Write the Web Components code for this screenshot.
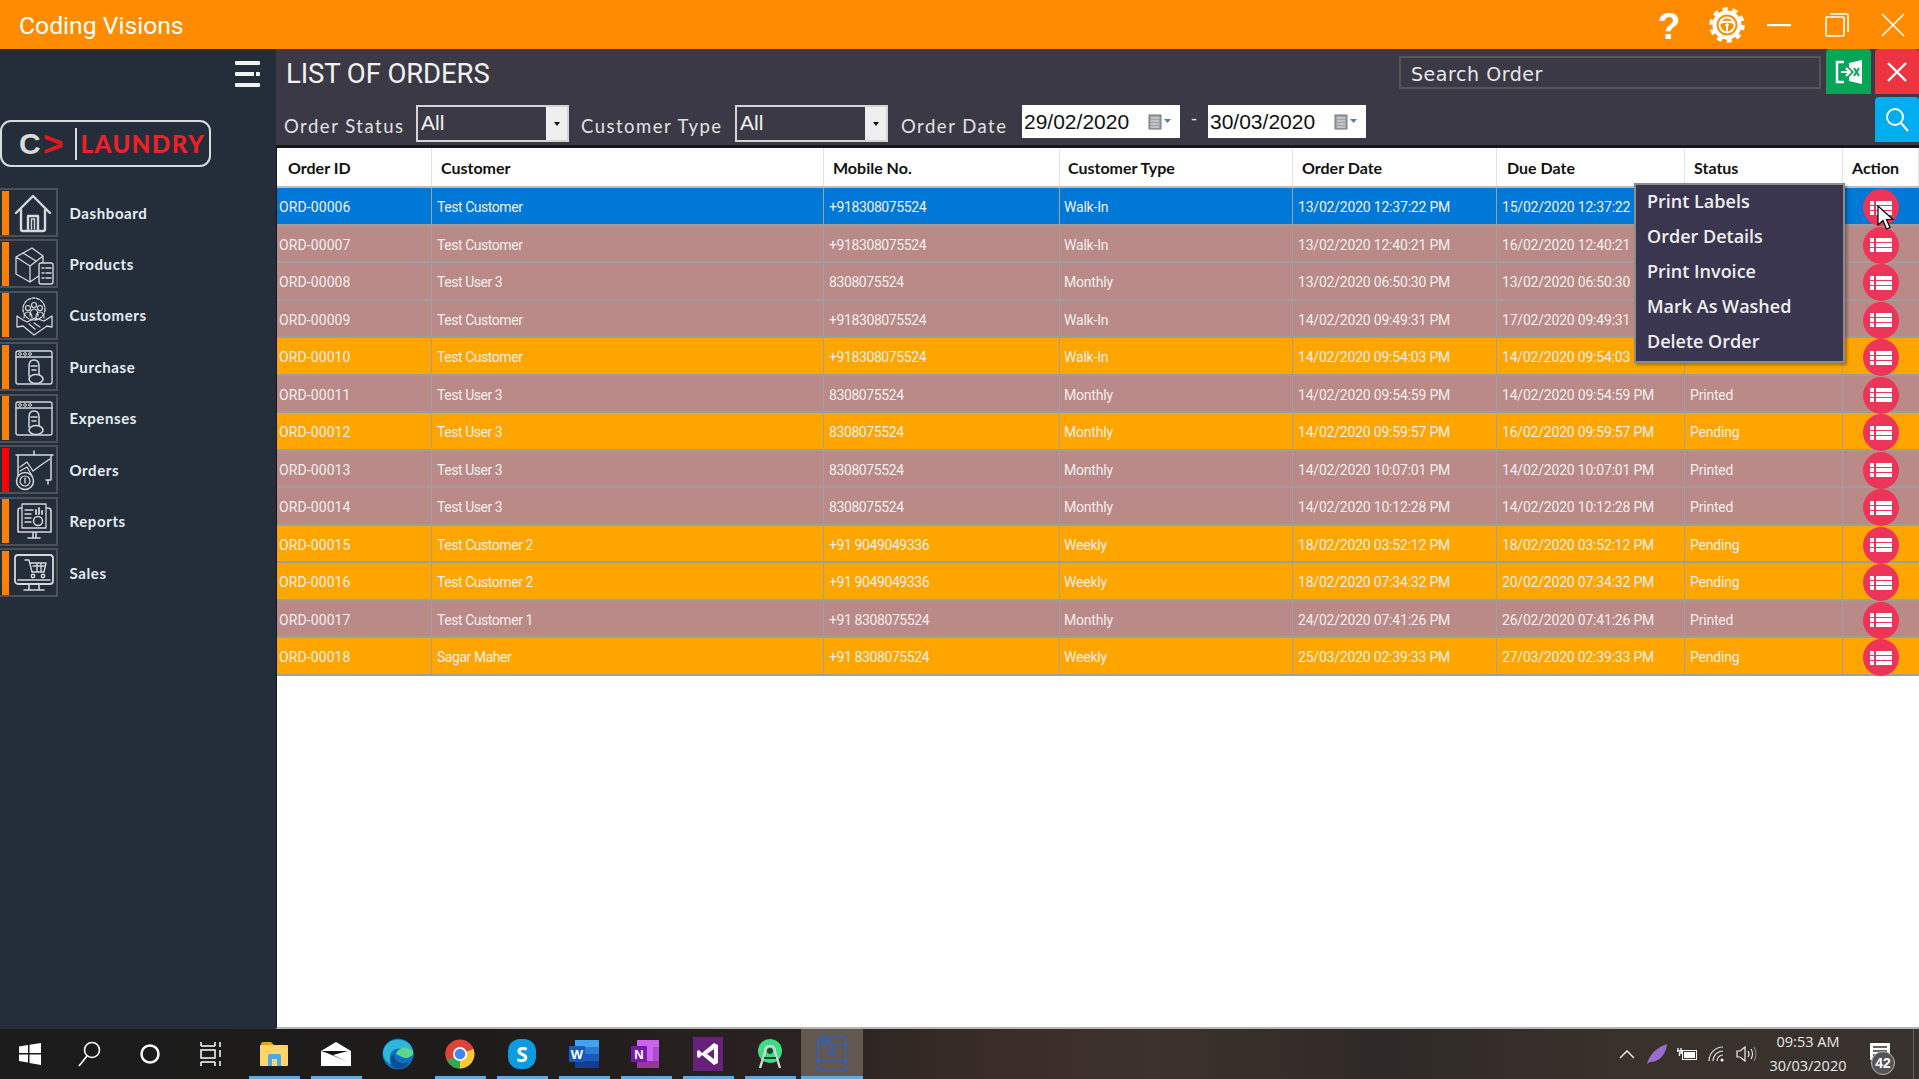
<!DOCTYPE html>
<html>
<head>
<meta charset="utf-8">
<title>Coding Visions</title>
<style>
    html, body { margin: 0; padding: 0; height: 100%; overflow: hidden; }
    body { display: flex; flex-direction: column; height: 1079px; font-family: "Liberation Sans", sans-serif; background: #242E3A; }
    .middle { display: flex; flex: 1; min-height: 0; }
    main-panel { flex: 1; min-width: 0; }
</style>
</head>
<body>
<title-bar></title-bar>
<div class="middle">
    <side-bar></side-bar>
    <main-panel></main-panel>
</div>
<task-bar></task-bar>

<script>
const navIcons = {
    home: `<path d="M3 21 L20 4 L37 21 M8 18 V37 Q8 39 10 39 H30 Q32 39 32 37 V18 M15 38 V24 H25 V38" stroke-width="2.4"/><path d="M18.500 37 V27 H21.500 V37" stroke-width="1.4"/>`,
    box: `<path d="M3 14 L19 5 L30 13 V30 L17 39 L3 31 Z M3 14 L17 23 L30 13 M17 23 V39 M10 10 L23 18" stroke-width="1.3"/><rect x="26" y="20" width="14" height="21" rx="2" fill="#242E3A" stroke-width="1.4"/><path d="M29 25 H31 M33 25 H38 M29 30 H31 M33 30 H38 M29 35 H31 M33 35 H38" stroke-width="1.4"/>`,
    people: `<circle cx="21" cy="15" r="11" stroke-width="1.3" stroke-dasharray="3 1.5"/><circle cx="15" cy="14" r="2.5" stroke-width="1.2"/><circle cx="21" cy="11" r="2.5" stroke-width="1.2"/><circle cx="27" cy="14" r="2.5" stroke-width="1.2"/><path d="M11 24 Q11 18 15 18 Q19 18 19 24 M17 22 Q17 15 21 15 Q25 15 25 22 M23 24 Q23 18 27 18 Q31 18 31 24" stroke-width="1.2"/><path d="M4 22 V33 L10 32 L21 41 L34 32 L39 33 V22 L31 27 L22 24 L14 28 L10 26 Z M16 30 L22 35 M21 29 L27 33" stroke-width="1.3"/>`,
    shop: `<rect x="3" y="5" width="36" height="33" rx="2" stroke-width="1.4"/><path d="M3 11 H39" stroke-width="1.4"/><circle cx="7" cy="8" r="1.4" stroke-width="1"/><circle cx="12" cy="8" r="1.4" stroke-width="1"/><circle cx="17" cy="8" r="1.4" stroke-width="1"/><path d="M16 30 V20 Q16 14 21 14 Q26 14 26 20 V30 M18 20 H24 M19 24 H23" stroke-width="1.5"/><ellipse cx="23" cy="33" rx="7" ry="4.5" fill="#242E3A" stroke-width="1.6"/>`,
    chart: `<path d="M3 6 H40 M5 6 V28 M38 6 V31 M21 2 V6 M33 31 H38 M35 31 V35" stroke-width="1.5"/><path d="M7 18 L14 13 L20 22 L28 16 L37 10 M7 22 L14 18 L19 27" stroke-width="1.3"/><circle cx="12" cy="32" r="8.5" fill="#242E3A" stroke-width="1.5"/><circle cx="12" cy="32" r="5" stroke-width="1.2"/><path d="M12 29 V34" stroke-width="1.4"/>`,
    report: `<path d="M7 8 H35 Q38 8 38 11 V32 H5 V11 Q5 8 7 8 Z M15 38 H27 M20 32 V38 M23 32 V38" stroke-width="1.6"/><rect x="9" y="4" width="24" height="24" fill="#242E3A" stroke-width="1.3"/><path d="M12 10 H20 M12 14 H18 M12 18 H18 M12 22 H18" stroke-width="1.4"/><path d="M23 14 V10 M26 14 V8 M29 14 V11" stroke-width="1.8"/><circle cx="25" cy="21" r="4.5" stroke-width="1.5"/>`,
    cart: `<rect x="2" y="3" width="38" height="29" rx="3" stroke-width="1.8"/><path d="M5 28 H37 M16 32 V37 M26 32 V37 M11 38 H31" stroke-width="1.6"/><path d="M12 8 H16 L19 20 H31 L33 11 H17 M20 14 H32 M24 11 V20 M28 11 V20" stroke-width="1.4"/><circle cx="20" cy="24" r="1.7" stroke-width="1.4"/><circle cx="30" cy="24" r="1.7" stroke-width="1.4"/>`
};

class TitleBar extends HTMLElement {
    constructor(){
        super();
        this.attachShadow({mode:'open'});
        this.shadowRoot.innerHTML = `
        <style>
            :host { display: flex; align-items: center; height: 49px; background: #FF8C00; color: #fff; flex: none; position: relative; }
            .name { margin: 2px 0 0 19px; font: 24.700px Roboto, sans-serif; flex: 1; }
            .help { font: bold 37px "Liberation Sans", sans-serif; width: 40px; text-align: center; margin-top: 4px; }
            svg { display: block; }
            .ctl { display: flex; align-items: center; justify-content: center; }
        </style>
        <div class="name">Coding Visions</div>
        <div class="help">?</div>
        <div class="ctl" style="width:38px;margin-left:19px;margin-top:2px">
            <svg width="38" height="38" viewBox="0 0 38 38" fill="none" stroke="#fff">
                <circle cx="19" cy="18" r="15.500" stroke-width="4.500" stroke-dasharray="5 4.740"/>
                <circle cx="19" cy="18" r="12.500" stroke-width="4"/>
                <circle cx="19" cy="18" r="7.500" stroke-width="2"/>
                <circle cx="19" cy="18" r="1.800" fill="#fff" stroke="none"/>
                <path d="M12 16 Q19 13.500 26 16 M19 18 V25" stroke-width="2"/>
            </svg>
        </div>
        <div class="ctl" style="width:24px;margin-left:21px"><svg width="24" height="4"><rect width="24" height="2.200" y="1" fill="#fff"/></svg></div>
        <div class="ctl" style="width:24px;margin-left:34px">
            <svg width="24" height="24" fill="none" stroke="#fff" stroke-width="1.600"><rect x="1" y="4" width="18" height="19" rx="1"/><path d="M5 1 H22 Q23 1 23 2 V19"/></svg>
        </div>
        <div class="ctl" style="width:24px;margin-left:32px;margin-right:14px">
            <svg width="24" height="24" stroke="#fff" stroke-width="1.600"><path d="M1 1 L23 23 M23 1 L1 23"/></svg>
        </div>`;
    }
}
window.customElements.define('title-bar', TitleBar);

class NavItem extends HTMLElement {
    constructor(){
        super();
        this.attachShadow({mode:'open'});
    }
    connectedCallback(){
        let active = this.hasAttribute("active");
        let icon = navIcons[this.getAttribute("icon")];
        this.shadowRoot.innerHTML = `
        <style>
            :host { display: flex; align-items: center; height: 49px; }
            .tile { display: flex; align-items: center; width: 58px; height: 49px; box-sizing: border-box; border: 2px solid #4C5058; border-left: 0; padding-left: 2px; }
            .bar { width: 7px; height: 44px; background: ${active ? "#FF0000" : "#FF8000"}; }
            svg { margin-left: 4px; }
            .label { margin-left: 11.500px; font: bold 15px Lato, sans-serif; color: #E6EDF5; letter-spacing: 0.6px; }
        </style>
        <div class="tile"><div class="bar"></div><svg width="42" height="42" viewBox="0 0 42 42" fill="none" stroke="#D5D8DC" stroke-linejoin="round" stroke-linecap="round">${icon}</svg></div>
        <div class="label"><slot></slot></div>`;
    }
}
window.customElements.define('nav-item', NavItem);

class SideBar extends HTMLElement {
    constructor(){
        super();
        this.attachShadow({mode:'open'});
        this.shadowRoot.innerHTML = `
        <style>
            :host { display: block; width: 276px; flex: none; background: #242E3A; box-sizing: border-box; padding-top: 12px; }
            .burger { width: 25px; margin-left: 235px; display: flex; flex-direction: column; gap: 7px; }
            .burger div { height: 4px; background: #F2F2F2; border-radius: 1px; }
            .burger .mid { background: linear-gradient(90deg, #F2F2F2 0 19px, transparent 19px 21px, #F2F2F2 21px); }
            .logo { display: flex; align-items: center; margin-top: 33px; width: 211px; height: 47px; box-sizing: border-box; border: 2px solid #D9DBDD; border-radius: 11px; padding-left: 17px; }
            .c { font: bold 30px "Liberation Sans", sans-serif; color: #DADADA; width: 24px; }
            .gt { font: bold 35px "Liberation Sans", sans-serif; color: #E8141C; width: 32px; }
            .div { width: 1.500px; height: 32px; background: #D9DBDD; margin-right: 4px; }
            .laundry { font: 900 24px Lato, sans-serif; color: #EE2027; letter-spacing: 1.500px; }
            nav { display: flex; flex-direction: column; gap: 2.450px; margin-top: 21px; }
        </style>
        <div class="burger"><div></div><div class="mid"></div><div></div></div>
        <div class="logo"><span class="c">C</span><span class="gt">&gt;</span><span class="div"></span><span class="laundry">LAUNDRY</span></div>
        <nav>
            <nav-item icon="home">Dashboard</nav-item>
            <nav-item icon="box">Products</nav-item>
            <nav-item icon="people">Customers</nav-item>
            <nav-item icon="shop">Purchase</nav-item>
            <nav-item icon="shop">Expenses</nav-item>
            <nav-item icon="chart" active>Orders</nav-item>
            <nav-item icon="report">Reports</nav-item>
            <nav-item icon="cart">Sales</nav-item>
        </nav>`;
    }
}
window.customElements.define('side-bar', SideBar);

class ComboBox extends HTMLElement {
    constructor(){
        super();
        this.attachShadow({mode:'open'});
        this.shadowRoot.innerHTML = `
        <style>
            :host { display: flex; width: 153px; height: 37px; box-sizing: border-box; border: 2px solid #D4D4D4; flex: none; }
            .val { flex: 1; font: 21px "Liberation Sans", sans-serif; color: #F2F2F2; padding-left: 3px; line-height: 32px; }
            .btn { width: 21px; background: #EFEFEF; display: flex; align-items: center; justify-content: center; }
            .btn i { border: 3px solid transparent; border-top: 4px solid #111; border-bottom: 0; }
        </style>
        <div class="val"><slot></slot></div><div class="btn"><i></i></div>`;
    }
}
window.customElements.define('combo-box', ComboBox);

class DateBox extends HTMLElement {
    constructor(){
        super();
        this.attachShadow({mode:'open'});
        this.shadowRoot.innerHTML = `
        <style>
            :host { display: flex; align-items: center; justify-content: space-between; width: 158px; height: 33px; box-sizing: border-box; background: #fff; padding: 0 8px 0 2px; flex: none; align-self: flex-start; }
            .val { font: 21px "Liberation Sans", sans-serif; color: #111; }
        </style>
        <div class="val"><slot></slot></div>
        <svg width="24" height="16" viewBox="0 0 24 16"><rect x="1" y="1" width="12" height="14" fill="#9DA3A8" stroke="#777"/><path d="M3 4 H11 M3 7 H11 M3 10 H11 M3 13 H11" stroke="#E4E6E8"/><path d="M16 5 H23 L19.500 9 Z" fill="#5A7FA8"/></svg>`;
    }
}
window.customElements.define('date-box', DateBox);

class OrderToolbar extends HTMLElement {
    constructor(){
        super();
        this.attachShadow({mode:'open'});
        this.shadowRoot.innerHTML = `
        <style>
            :host { display: block; height: 96px; background: #3A3945; flex: none; box-sizing: border-box; }
            .top { display: flex; align-items: flex-start; height: 49px; }
            h1 { margin: 6px 0 0 10px; font: 27.500px Roboto, sans-serif; color: #F2F2F2; flex: 1; line-height: 38px; letter-spacing: -0.1px; }
            .search { width: 422px; height: 33px; box-sizing: border-box; border: 2px solid #555; margin-top: 7px; font: 19px "DejaVu Sans", sans-serif; color: #E8E8E8; padding-left: 10px; line-height: 32px; letter-spacing: 0.55px; }
            .btn { display: flex; align-items: center; justify-content: center; width: 45px; height: 45px; border-radius: 4px 4px 0 0; }
            .green { background: #07A558; margin-left: 5px; }
            .red { background: #EC3340; margin-left: 4px; width: 44px; }
            .filters { display: flex; align-items: flex-start; padding-left: 8px; margin-top: 7px; }
            label { font: 18.500px Lato, sans-serif; color: #E2E2E2; letter-spacing: 1.500px; line-height: 42px; height: 37px; white-space: nowrap; }
            .blue { background: #00AEEF; width: 44px; height: 45px; margin-left: auto; border-radius: 4px 4px 0 0; display: flex; align-items: center; justify-content: center; }
            .dash { color: #ddd; font: 18px "Liberation Sans", sans-serif; width: 28px; text-align: center; line-height: 28px; }
        </style>
        <div class="top">
            <h1>LIST OF ORDERS</h1>
            <div class="search">Search Order</div>
            <div class="btn green">
                <svg width="28" height="28" viewBox="0 0 28 28" fill="none"><path d="M9 4 H2 V24 H9" stroke="#fff" stroke-width="2.500"/><path d="M6 14 H14 M11 10 L15 14 L11 18" stroke="#fff" stroke-width="2.200"/><path d="M14 5 L27 2 V26 L14 23 V19 L19 14 L14 9 Z" fill="#fff"/><path d="M19 10 L24 18 M24 10 L19 18" stroke="#07A558" stroke-width="2"/></svg>
            </div>
            <div class="btn red">
                <svg width="20" height="20" stroke="#fff" stroke-width="2.400"><path d="M1 1 L19 19 M19 1 L1 19"/></svg>
            </div>
        </div>
        <div class="filters">
            <label style="width:132px">Order Status</label>
            <combo-box>All</combo-box>
            <label style="width:154px;margin-left:12px">Customer Type</label>
            <combo-box>All</combo-box>
            <label style="width:121px;margin-left:13px">Order Date</label>
            <date-box>29/02/2020</date-box>
            <div class="dash">-</div>
            <date-box>30/03/2020</date-box>
            <div class="blue" style="margin-top:-8px">
                <svg width="24" height="26" viewBox="0 0 24 26" fill="none" stroke="#fff" stroke-width="2"><circle cx="10" cy="10" r="8"/><path d="M16 16 L23 24"/></svg>
            </div>
        </div>`;
    }
}
window.customElements.define('order-toolbar', OrderToolbar);

const gridCols = "155px 392px 236px 233px 204px 188px 158px 76px";

class OrderRow extends HTMLElement {
    constructor(){
        super();
        this.attachShadow({mode:'open'});
    }
    connectedCallback(){
        let cells = JSON.parse(this.getAttribute("cells"));
        let bg = this.getAttribute("bg");
        this.shadowRoot.innerHTML = `
        <style>
            :host { display: grid; grid-template-columns: ${gridCols}; height: 37.500px; background: ${bg}; box-sizing: border-box; border-bottom: 2px solid #9E9E9E; color: #F3EEEE; font: 14px Roboto, sans-serif; letter-spacing: -0.2px; }
            .c { display: flex; align-items: center; padding-left: 5px; border-right: 1px solid #A0A0A0; box-sizing: border-box; white-space: nowrap; overflow: hidden; }
            .c:nth-of-type(1) { padding-left: 2px; letter-spacing: 0.1px; }
            .c:nth-of-type(2) { letter-spacing: -0.45px; }
            .c:nth-of-type(3) { letter-spacing: -0.4px; }
            .c:nth-of-type(4) { padding-left: 4px; }
            .a { position: relative; border: 0; padding: 0; overflow: visible; justify-content: center; padding-right: 1px; }
            .dot { width: 36px; height: 37px; flex: none; border-radius: 50%; background: #EC3558; display: flex; align-items: center; justify-content: center; margin-top: 1px; }
        </style>
        ${cells.map(t => `<div class="c">${t}</div>`).join("")}
        <div class="c a"><div class="dot"><svg width="22" height="16" fill="#fff"><rect y="1" width="4" height="4"/><rect y="6" width="4" height="4"/><rect y="11" width="4" height="4"/><rect x="6" y="1" width="16" height="4"/><rect x="6" y="6" width="16" height="4"/><rect x="6" y="11" width="16" height="4"/></svg></div></div>`;
    }
}
window.customElements.define('order-row', OrderRow);

class ActionMenu extends HTMLElement {
    constructor(){
        super();
        this.attachShadow({mode:'open'});
        this.shadowRoot.innerHTML = `
        <style>
            :host { display: block; position: absolute; left: 1357px; top: 35px; width: 211px; height: 180px; box-sizing: border-box; background: #3A3650; border: 2px solid #8C8C8C; box-shadow: 2px 2px 3px rgba(0,0,0,.35); padding-left: 11px; z-index: 2; }
            div { height: 35px; font: 600 18px/33px "Open Sans", sans-serif; color: #EFEFEF; }
        </style>
        <div>Print Labels</div><div>Order Details</div><div>Print Invoice</div><div>Mark As Washed</div><div>Delete Order</div>`;
    }
}
window.customElements.define('action-menu', ActionMenu);

// the status of the first five orders is covered by the open menu
const orders = [
    ["ORD-00006","Test Customer","+918308075524","Walk-In","13/02/2020 12:37:22 PM","15/02/2020 12:37:22","","b"],
    ["ORD-00007","Test Customer","+918308075524","Walk-In","13/02/2020 12:40:21 PM","16/02/2020 12:40:21","","p"],
    ["ORD-00008","Test User 3","8308075524","Monthly","13/02/2020 06:50:30 PM","13/02/2020 06:50:30","","p"],
    ["ORD-00009","Test Customer","+918308075524","Walk-In","14/02/2020 09:49:31 PM","17/02/2020 09:49:31","","p"],
    ["ORD-00010","Test Customer","+918308075524","Walk-In","14/02/2020 09:54:03 PM","14/02/2020 09:54:03","","o"],
    ["ORD-00011","Test User 3","8308075524","Monthly","14/02/2020 09:54:59 PM","14/02/2020 09:54:59 PM","Printed","p"],
    ["ORD-00012","Test User 3","8308075524","Monthly","14/02/2020 09:59:57 PM","16/02/2020 09:59:57 PM","Pending","o"],
    ["ORD-00013","Test User 3","8308075524","Monthly","14/02/2020 10:07:01 PM","14/02/2020 10:07:01 PM","Printed","p"],
    ["ORD-00014","Test User 3","8308075524","Monthly","14/02/2020 10:12:28 PM","14/02/2020 10:12:28 PM","Printed","p"],
    ["ORD-00015","Test Customer 2","+91 9049049336","Weekly","18/02/2020 03:52:12 PM","18/02/2020 03:52:12 PM","Pending","o"],
    ["ORD-00016","Test Customer 2","+91 9049049336","Weekly","18/02/2020 07:34:32 PM","20/02/2020 07:34:32 PM","Pending","o"],
    ["ORD-00017","Test Customer 1","+91 8308075524","Monthly","24/02/2020 07:41:26 PM","26/02/2020 07:41:26 PM","Printed","p"],
    ["ORD-00018","Sagar Maher","+91 8308075524","Weekly","25/03/2020 02:39:33 PM","27/03/2020 02:39:33 PM","Pending","o"]
];
const rowColors = { b: "#0078D7", p: "#B98A88", o: "#FFA500" };

class OrdersTable extends HTMLElement {
    constructor(){
        super();
        this.attachShadow({mode:'open'});
        let heads = [["Order ID",11],["Customer",9],["Mobile No.",9],["Customer Type",8],["Order Date",9],["Due Date",10],["Status",9],["Action",9]];
        this.shadowRoot.innerHTML = `
        <style>
            :host { display: block; position: relative; flex: 1; background: #fff; border-top: 3px solid #16161A; border-left: 1px solid #16161A; border-bottom: 2px solid #B5B5B5; box-sizing: border-box; }
            .head { display: grid; grid-template-columns: ${gridCols}; height: 40px; border-bottom: 2px solid #BDBDBD; box-sizing: border-box; }
            .head div { display: flex; align-items: center; font: bold 16px Lato, sans-serif; color: #111; border-right: 1px solid #E4E4E4; box-sizing: border-box; white-space: nowrap; }
            .cursor { position: absolute; left: 1600px; top: 57px; z-index: 3; }
        </style>
        <div class="head">${heads.map(h => `<div style="padding-left:${h[1]}px">${h[0]}</div>`).join("")}</div>
        <div class="rows"></div>
        <action-menu></action-menu>
        <svg class="cursor" width="18" height="26" viewBox="0 0 18 26"><path d="M1 1 V20 L6 15.500 L9.500 24 L13 22.500 L9.500 14.500 L16 14.500 Z" fill="#fff" stroke="#000" stroke-width="1.200"/></svg>`;
        let rows = this.shadowRoot.querySelector(".rows");
        orders.forEach((o) => {
            let r = document.createElement("order-row");
            r.setAttribute("bg", rowColors[o[7]]);
            r.setAttribute("cells", JSON.stringify(o.slice(0, 7)));
            rows.appendChild(r);
        });
    }
}
window.customElements.define('orders-table', OrdersTable);

class MainPanel extends HTMLElement {
    constructor(){
        super();
        this.attachShadow({mode:'open'});
        this.shadowRoot.innerHTML = `
        <style>:host { display: flex; flex-direction: column; background: #fff; min-height: 0; }</style>
        <order-toolbar></order-toolbar>
        <orders-table></orders-table>`;
    }
}
window.customElements.define('main-panel', MainPanel);

const taskIcons = [
    { w: 60, svg: `<svg width="22" height="22" viewBox="0 0 22 22" fill="#fff"><path d="M0 3.500 L9 2 V10 H0 Z M10.500 1.800 L22 0 V10 H10.500 Z M0 11.500 H9 V19.500 L0 18 Z M10.500 11.500 H22 V22 L10.500 20 Z"/></svg>` },
    { w: 60, svg: `<svg width="24" height="26" viewBox="0 0 24 26" fill="none" stroke="#fff" stroke-width="1.600"><circle cx="14" cy="9" r="7.500"/><path d="M9 15 L1 25"/></svg>` },
    { w: 60, svg: `<svg width="22" height="22" viewBox="0 0 22 22" fill="none" stroke="#fff" stroke-width="2.500"><circle cx="11" cy="11" r="8.500"/></svg>` },
    { w: 62.500, svg: `<svg width="22" height="24" viewBox="0 0 22 24" fill="none" stroke="#fff" stroke-width="1.500"><path d="M1 0 V4 M15 0 V4 M1 4 H15 M1 20 V24 M15 20 V24 M1 20 H15"/><rect x="1" y="8" width="14" height="8"/><path d="M20 0 V5 M20 8 V15 M20 19 V24"/></svg>` },
    { run: 1, svg: `<svg width="28" height="26" viewBox="0 0 28 26"><path d="M1 3 Q1 1 3 1 H11 L14 4 H1 Z" fill="#E8A020"/><path d="M0 4 H27 Q28 4 28 5 V24 Q28 25 27 25 H1 Q0 25 0 24 Z" fill="#FFD56A"/><path d="M8 25 V15 Q8 13 10 13 H19 Q21 13 21 15 V25 H17 V18 H12 V25 Z" fill="#4FA8E0"/></svg>` },
    { run: 1, svg: `<svg width="30" height="24" viewBox="0 0 30 24"><path d="M0 9 L15 0 L30 9 V24 H0 Z" fill="#fff"/><path d="M0 9 H27 L12 13 L27 20 L6 11 Z" fill="#111"/></svg>` },
    { svg: `<svg width="32" height="32" viewBox="0 0 32 32"><circle cx="16" cy="16" r="15.500" fill="#0F72C0"/><path d="M1 15 C2 2 16 -1 25 4 C31 8 32 15 31 19 C28 12 20 9 14 11 C8 13 6 20 10 27 C4 24 1 20 1 15 Z" fill="#2FB6D8"/><path d="M31 13 C31 20 24 21 20 19 L14 16 C16 10 22 9 25 10 Z" fill="#5BD88A"/><path d="M12 16 C12 24 20 27 27 24 C24 30 16 33 11 29 C7 26 8 18 12 16 Z" fill="#0A4E94"/></svg>` },
    { run: 1, svg: `<svg width="30" height="30" viewBox="0 0 30 30"><circle cx="15" cy="15" r="14.500" fill="#DB4437"/><path d="M15 15 L2.500 22 A14.500 14.500 0 0 1 4 5 Z" fill="#DB4437"/><path d="M15 15 L28.500 10 A14.500 14.500 0 0 1 15 29.500 Z" fill="#FCC934"/><path d="M15 15 L15 29.500 A14.500 14.500 0 0 1 2 21.500 Z" fill="#34A853"/><circle cx="15" cy="15" r="7" fill="#fff"/><circle cx="15" cy="15" r="5.300" fill="#4285F4"/></svg>` },
    { run: 1, svg: `<svg width="28" height="32" viewBox="0 0 28 32"><rect x="0" y="1" width="28" height="30" rx="12" fill="#0D9BE0"/><text x="14" y="24" text-anchor="middle" fill="#fff" font-family="Open Sans" font-weight="700" font-size="21">S</text></svg>` },
    { run: 1, svg: `<svg width="30" height="30" viewBox="0 0 30 30"><rect x="6" y="1" width="24" height="28" rx="1" fill="#2B7CD3"/><rect x="6" y="1" width="24" height="7" fill="#41A5EE"/><rect x="6" y="15" width="24" height="7" fill="#185ABD"/><rect x="6" y="22" width="24" height="7" fill="#103F91"/><rect x="0" y="7" width="16" height="16" rx="1" fill="#185ABD"/><text x="8" y="20" text-anchor="middle" fill="#fff" font-family="Liberation Sans" font-weight="700" font-size="13">W</text></svg>` },
    { run: 1, svg: `<svg width="30" height="30" viewBox="0 0 30 30"><rect x="6" y="1" width="22" height="28" fill="#CA64EA"/><rect x="22" y="8" width="6" height="14" fill="#AE4BD5"/><rect x="6" y="22" width="22" height="7" fill="#96379F"/><rect x="0" y="7" width="16" height="16" rx="1" fill="#7719AA"/><text x="8" y="20" text-anchor="middle" fill="#fff" font-family="Liberation Sans" font-weight="700" font-size="13">N</text></svg>` },
    { run: 1, svg: `<svg width="30" height="34" viewBox="0 0 30 34"><rect y="0" width="30" height="34" fill="#68217A"/><path d="M21 6 L25 8 V26 L21 28 L9 18 L6 21 L4 20 V14 L6 13 L9 16 Z M21 12 L14 17 L21 22 Z" fill="#fff"/></svg>` },
    { run: 1, svg: `<svg width="30" height="32" viewBox="0 0 30 32"><circle cx="15" cy="13" r="12" fill="#3DDC84"/><path d="M15 8 Q20 8 20 14 L25 30 M15 8 Q10 8 10 14 L5 30" fill="none" stroke="#C8D8D0" stroke-width="2.500"/><circle cx="15" cy="13" r="3" fill="#16482C"/><path d="M9 20 H21" stroke="#16482C" stroke-width="2"/></svg>` },
    { run: 2, svg: `<svg width="30" height="36" viewBox="0 0 30 36" fill="none" stroke="#2E63C0" stroke-width="1.600"><rect x="1" y="1" width="28" height="34" rx="4"/><path d="M1 8 H29 M1 24 H29"/><circle cx="6" cy="4.500" r="1.500"/><circle cx="11" cy="4.500" r="1.500"/><path d="M11 20 L15 11 L19 20 M12.500 17 H17.500"/></svg>` }
];

class TaskBar extends HTMLElement {
    constructor(){
        super();
        this.attachShadow({mode:'open'});
        this.shadowRoot.innerHTML = `
        <style>
            :host { display: flex; align-items: stretch; height: 50px; flex: none; background: linear-gradient(90deg, #1B1B1B 0%, #1E1C1B 25%, #2A2220 42%, #3A2D28 52%, #3E322C 60%, #2F2A27 72%, #3A312C 85%, #38322E 100%); color: #fff; }
            .t { display: flex; align-items: center; justify-content: center; flex: none; position: relative; box-sizing: border-box; width: 62.100px; }
            .run1::after { content: ""; position: absolute; left: 6px; right: 5px; bottom: 0; height: 3px; background: #63A9D9; }
            .run2 { background: #625850; }
            .run2::after { content: ""; position: absolute; left: 0; right: 0; bottom: 0; height: 3px; background: #63A9D9; }
            .tray { margin-left: auto; display: flex; align-items: center; }
            .s { width: 30px; display: flex; justify-content: center; align-items: center; }
            .clock { width: 92px; text-align: center; font: 14.500px/24px "Open Sans", sans-serif; color: #E8E8E8; }
            .note { width: 60px; height: 50px; position: relative; box-sizing: border-box; border-right: 1px solid #666; }
            .note svg { position: absolute; left: 16px; top: 14px; }
            .badge { position: absolute; left: 17px; top: 22px; width: 24px; height: 24px; box-sizing: border-box; border-radius: 50%; background: #555; border: 1px solid #BBB; font: bold 14px/22px "Liberation Sans", sans-serif; text-align: center; color: #fff; }
        </style>
        ${taskIcons.map(i => `<div class="t ${i.run ? "run" + i.run : ""}" ${i.w ? `style="width:${i.w}px"` : ""}>${i.svg}</div>`).join("")}
        <div class="tray">
            <div class="s"><svg width="16" height="9" fill="none" stroke="#fff" stroke-width="1.300"><path d="M1 8 L8 1 L15 8"/></svg></div>
            <div class="s"><svg width="20" height="20" viewBox="0 0 20 20"><path d="M0 20 C2 12 8 4 20 0 C19 10 13 18 3 18 Z" fill="#9A6CD0"/></svg></div>
            <div class="s"><svg width="22" height="14" viewBox="0 0 22 14" fill="none" stroke="#fff"><rect x="6.500" y="3.500" width="14" height="9"/><rect x="8" y="5" width="11" height="6" fill="#fff" stroke="none"/><path d="M2 1 V4 M5 1 V4 M1 4 H6 V6 H3.500 V9" stroke-width="1.300"/></svg></div>
            <div class="s"><svg width="18" height="16" viewBox="0 0 18 16" fill="none" stroke="#ddd" stroke-width="1.200"><path d="M1 15 A14 14 0 0 1 15 1 M5 15 A10 10 0 0 1 15 5 M9 15 A6 6 0 0 1 15 9"/><circle cx="14" cy="14" r="1.500" fill="#fff" stroke="none"/></svg></div>
            <div class="s"><svg width="22" height="16" viewBox="0 0 22 16" fill="none" stroke="#eee" stroke-width="1.200"><path d="M1 5 H4 L9 1 V15 L4 11 H1 Z"/><path d="M12 5 Q14 8 12 11 M15 3 Q18 8 15 13" stroke-width="1.100"/><path d="M18 1 Q22 8 18 15" stroke="#888" stroke-width="1.100"/></svg></div>
            <div class="clock">09:53 AM<br>30/03/2020</div>
            <div class="note">
                <svg width="20" height="18" viewBox="0 0 20 18"><rect width="20" height="17" fill="#fff"/><path d="M3 4 H17 M3 8 H17 M3 12 H13" stroke="#333" stroke-width="1.300"/></svg>
                <div class="badge">42</div>
            </div>
            <div style="width:5px"></div>
        </div>`;
    }
}
window.customElements.define('task-bar', TaskBar);
</script>
</body>
</html>
